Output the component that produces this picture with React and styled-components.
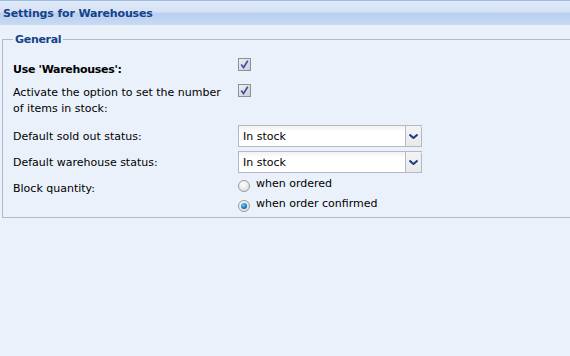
import React from "react";
import styled, { createGlobalStyle } from "styled-components";

const Global = createGlobalStyle`
  html, body { margin: 0; padding: 0; }
  body {
    width: 570px; height: 356px; overflow: hidden;
    background: #eaf1fb;
    font-family: "DejaVu Sans", Tahoma, sans-serif;
    font-size: 11px;
    color: #000;
  }
`;

const Page = styled.div`
  width: 570px;
  height: 356px;
  background: #eaf1fb;
`;

const Header = styled.div`
  height: 25px;
  box-sizing: border-box;
  border-top: 1px solid #99bbe8;
  background: linear-gradient(to bottom, #e1eaf7 0px, #d5e2f5 11px, #b9d0f0 12px, #c7daf3 24px);
  display: flex;
  align-items: center;
  padding-left: 3px;
  color: #15428b;
  font-weight: bold;
  font-size: 11px;
  letter-spacing: -0.15px;
`;

const Body = styled.div`
  padding: 8px 0 0 2px;
`;

const Fieldset = styled.fieldset`
  margin: 0 -10px 0 0;
  border: 1px solid #b5b8c8;
  padding: 12px 10px 5px 10px;
  box-sizing: border-box;
`;

const Legend = styled.legend`
  color: #15428b;
  font-weight: bold;
  font-size: 11px;
  line-height: 13px;
  letter-spacing: -0.3px;
  padding: 0 2px;
  margin-left: 0;
`;

const Row = styled.div`
  display: grid;
  grid-template-columns: 225px 1fr;
  align-items: start;
  height: ${(p) => p.$h}px;
`;

const Label = styled.div`
  font-weight: ${(p) => (p.$bold ? "bold" : "normal")};
  letter-spacing: ${(p) => (p.$bold ? "-0.3px" : "0")};
  line-height: ${(p) => p.$lh || 17}px;
  padding-top: ${(p) => p.$pt ?? 3}px;
`;

const Check = styled.span`
  width: 11px;
  height: 11px;
  border: 1px solid #8e8f8f;
  background: linear-gradient(135deg, #eef0f5, #c9cedb);
  display: inline-flex;
  align-items: center;
  justify-content: center;
`;

const Select = styled.div`
  width: 184px;
  height: 22px;
  box-sizing: border-box;
  display: flex;
  border: 1px solid #b5b8c8;
  border-right: none;
  background: #fff;
`;

const SelectText = styled.div`
  flex: 1;
  display: flex;
  align-items: center;
  padding: 1px 0 0 4px;
  background: linear-gradient(to bottom, #f2f2f2 0, #fafafa 4px, #fff 5px, #fff 100%);
`;

const Trigger = styled.div`
  width: 17px;
  box-sizing: border-box;
  border-left: 1px solid #b5b8c8;
  border-right: 1px solid #b5b8c8;
  background: linear-gradient(to bottom, #f4f4f4, #e9e9e9);
  border-radius: 0 2px 0 0;
  display: flex;
  align-items: center;
  justify-content: center;
`;

const RadioGroup = styled.div`
  display: flex;
  flex-direction: column;
  gap: 8px;
  padding-top: 3px;
`;

const RadioItem = styled.div`
  display: flex;
  align-items: flex-start;
  gap: 6px;
  height: 12px;
`;

const RadioText = styled.span`
  line-height: 12px;
  margin-top: -2px;
`;

const RadioDot = styled.span`
  width: 10px;
  height: 10px;
  flex: none;
  border-radius: 50%;
  border: 1px solid #9a9a9a;
  background: radial-gradient(circle at 40% 35%, #fff, #d6d6d6);
  display: inline-flex;
  align-items: center;
  justify-content: center;
  &::after {
    content: "";
    display: ${(p) => (p.$on ? "block" : "none")};
    width: 6px;
    height: 6px;
    border-radius: 50%;
    background: radial-gradient(circle at 40% 35%, #6fd0ff, #0a6ab8 65%, #063e70);
  }
`;

const Tick = () => (
  <svg width="9" height="9" viewBox="0 0 9 9">
    <path d="M1.2 4.5 L3.5 7.5 L7.8 0.8" fill="none" stroke="#3c4f9c" strokeWidth="1.6" />
  </svg>
);

const Arrow = () => (
  <svg width="9" height="5" viewBox="0 0 9 5">
    <path d="M0.5 0.5 L4.5 4 L8.5 0.5" fill="none" stroke="#1b3f86" strokeWidth="2" />
  </svg>
);

export default function App() {
  return (
    <Page>
      <Global />
      <Header>Settings for Warehouses</Header>
      <Body>
        <Fieldset>
          <Legend>General</Legend>
          <Row $h={26}>
            <Label $bold>Use 'Warehouses':</Label>
            <Check><Tick /></Check>
          </Row>
          <Row $h={41}>
            <Label $lh={16} $pt={1}>Activate the option to set the number<br />of items in stock:</Label>
            <Check><Tick /></Check>
          </Row>
          <Row $h={26}>
            <Label>Default sold out status:</Label>
            <Select><SelectText>In stock</SelectText><Trigger><Arrow /></Trigger></Select>
          </Row>
          <Row $h={26}>
            <Label>Default warehouse status:</Label>
            <Select><SelectText>In stock</SelectText><Trigger><Arrow /></Trigger></Select>
          </Row>
          <Row $h={35}>
            <Label>Block quantity:</Label>
            <RadioGroup>
              <RadioItem><RadioDot /><RadioText>when ordered</RadioText></RadioItem>
              <RadioItem><RadioDot $on /><RadioText>when order confirmed</RadioText></RadioItem>
            </RadioGroup>
          </Row>
        </Fieldset>
      </Body>
    </Page>
  );
}
